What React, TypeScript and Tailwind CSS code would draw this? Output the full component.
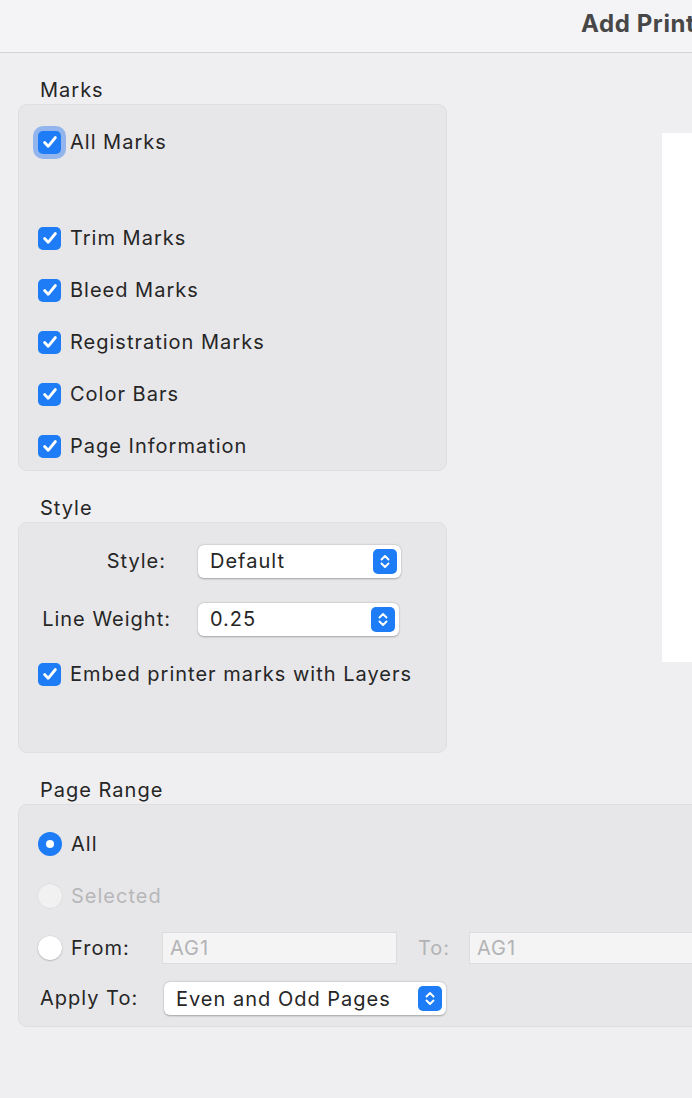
import React from "react";

const font = { fontFamily: "Inter, 'Noto Sans', sans-serif" };

function Check({ focus = false }: { focus?: boolean }) {
  return (
    <div
      className={
        "w-[23px] h-[23px] rounded-[5px] bg-[#1d7cf6] flex items-center justify-center shrink-0 " +
        (focus ? "shadow-[0_0_0_5px_rgba(40,120,240,0.45)]" : "")
      }
    >
      <svg width="18" height="18" viewBox="0 0 16 16">
        <path d="M3.2 8.4 L6.4 11.8 L12.8 4.0" fill="none" stroke="white" strokeWidth="2.5" strokeLinecap="round" strokeLinejoin="round" />
      </svg>
    </div>
  );
}

function Stepper() {
  return (
    <div className="w-[24px] h-[25px] rounded-[5px] bg-[#1d7cf6] flex items-center justify-center">
      <svg width="12" height="17" viewBox="0 0 12 17">
        <path d="M2.5 6.5 L6 3 L9.5 6.5" fill="none" stroke="white" strokeWidth="1.9" strokeLinecap="round" strokeLinejoin="round" />
        <path d="M2.5 10.5 L6 14 L9.5 10.5" fill="none" stroke="white" strokeWidth="1.9" strokeLinecap="round" strokeLinejoin="round" />
      </svg>
    </div>
  );
}

function Select({ value, w }: { value: string; w: string }) {
  return (
    <div
      className={
        "h-[33px] rounded-[6px] bg-white shadow-[0_0.5px_2px_rgba(0,0,0,0.3)] flex items-center justify-between pl-[12px] pr-[4px] " +
        w
      }
    >
      <span>{value}</span>
      <Stepper />
    </div>
  );
}

function CheckRow({ label, focus = false }: { label: string; focus?: boolean }) {
  return (
    <div className="h-[52px] flex items-center pl-[19px] gap-[9px]">
      <Check focus={focus} />
      <span>{label}</span>
    </div>
  );
}

function SectionLabel({ children }: { children: React.ReactNode }) {
  return <div className="h-[28px] leading-[28px] pl-[22px] text-[#262626]">{children}</div>;
}

export default function App() {
  return (
    <div
      className="w-[692px] h-[1098px] bg-[#efeff1] overflow-hidden text-[20px] tracking-[1px] text-[#262626]"
      style={font}
    >
      <div className="h-[53px] bg-[#f4f4f6] border-b border-[#d4d4d6] pl-[581px] flex items-center whitespace-nowrap overflow-hidden">
        <span className="text-[24px] font-bold tracking-[0.6px] text-[#474747] -mt-[4px]">Add Printer Marks</span>
      </div>

      <div className="pl-[18px]">
        <div className="flex">
          <div className="w-[429px] shrink-0">
            <div className="mt-[23px]">
              <SectionLabel>Marks</SectionLabel>
            </div>
            <div className="h-[367px] rounded-[9px] bg-[#e7e7e9] border border-[#dfdfe1] pt-[11px]">
              <CheckRow label="All Marks" focus />
              <div className="h-[44px]" />
              <CheckRow label="Trim Marks" />
              <CheckRow label="Bleed Marks" />
              <CheckRow label="Registration Marks" />
              <CheckRow label="Color Bars" />
              <CheckRow label="Page Information" />
            </div>

            <div className="mt-[23px]">
              <SectionLabel>Style</SectionLabel>
            </div>
            <div className="h-[231px] rounded-[9px] bg-[#e7e7e9] border border-[#dfdfe1] pt-[21px]">
              <div className="flex items-center h-[34px]">
                <div className="w-[147px] text-right">Style:</div>
                <div className="ml-[32px]">
                  <Select value="Default" w="w-[203px]" />
                </div>
              </div>
              <div className="flex items-center h-[34px] mt-[24px]">
                <div className="w-[152px] text-right">Line Weight:</div>
                <div className="ml-[27px]">
                  <Select value="0.25" w="w-[201px]" />
                </div>
              </div>
              <div className="flex items-center h-[24px] mt-[26px] pl-[19px] gap-[9px]">
                <Check />
                <span>Embed printer marks with Layers</span>
              </div>
            </div>
          </div>

          <div className="ml-[215px] mt-[80px] w-[40px] h-[529px] bg-white shrink-0" />
        </div>

        <div className="mt-[23px]">
          <SectionLabel>Page Range</SectionLabel>
        </div>
        <div className="w-[760px] h-[223px] rounded-[9px] bg-[#e7e7e9] border border-[#dfdfe1] pt-[13px]">
          <div className="h-[52px] flex items-center pl-[19px] gap-[9px]">
            <div className="w-[24px] h-[24px] rounded-full bg-[#1d7cf6] flex items-center justify-center">
              <div className="w-[8px] h-[8px] rounded-full bg-white" />
            </div>
            <span>All</span>
          </div>
          <div className="h-[52px] flex items-center pl-[19px] gap-[9px]">
            <div className="w-[24px] h-[24px] rounded-full bg-[#f1f1f2] shadow-[0_0_0_0.5px_rgba(0,0,0,0.08)]" />
            <span className="text-[#b7b7b9]">Selected</span>
          </div>
          <div className="h-[52px] flex items-center pl-[19px]">
            <div className="w-[24px] h-[24px] rounded-full bg-white shadow-[0_0.5px_1.5px_rgba(0,0,0,0.35)]" />
            <span className="ml-[9px] w-[91px]">From:</span>
            <div className="w-[235px] h-[32px] bg-[#f4f4f5] border border-[#dcdcde] flex items-center pl-[7px] text-[#b3b3b5]">
              AG1
            </div>
            <span className="ml-[21px] w-[51px] text-[#b3b3b5]">To:</span>
            <div className="w-[235px] h-[32px] bg-[#f4f4f5] border border-[#dcdcde] flex items-center pl-[7px] text-[#b3b3b5]">
              AG1
            </div>
          </div>
          <div className="h-[48px] flex items-center pl-[21px]">
            <span className="w-[124px]">Apply To:</span>
            <div className="h-[32px]">
              <Select value="Even and Odd Pages" w="w-[282px]" />
            </div>
          </div>
        </div>
      </div>
    </div>
  );
}
